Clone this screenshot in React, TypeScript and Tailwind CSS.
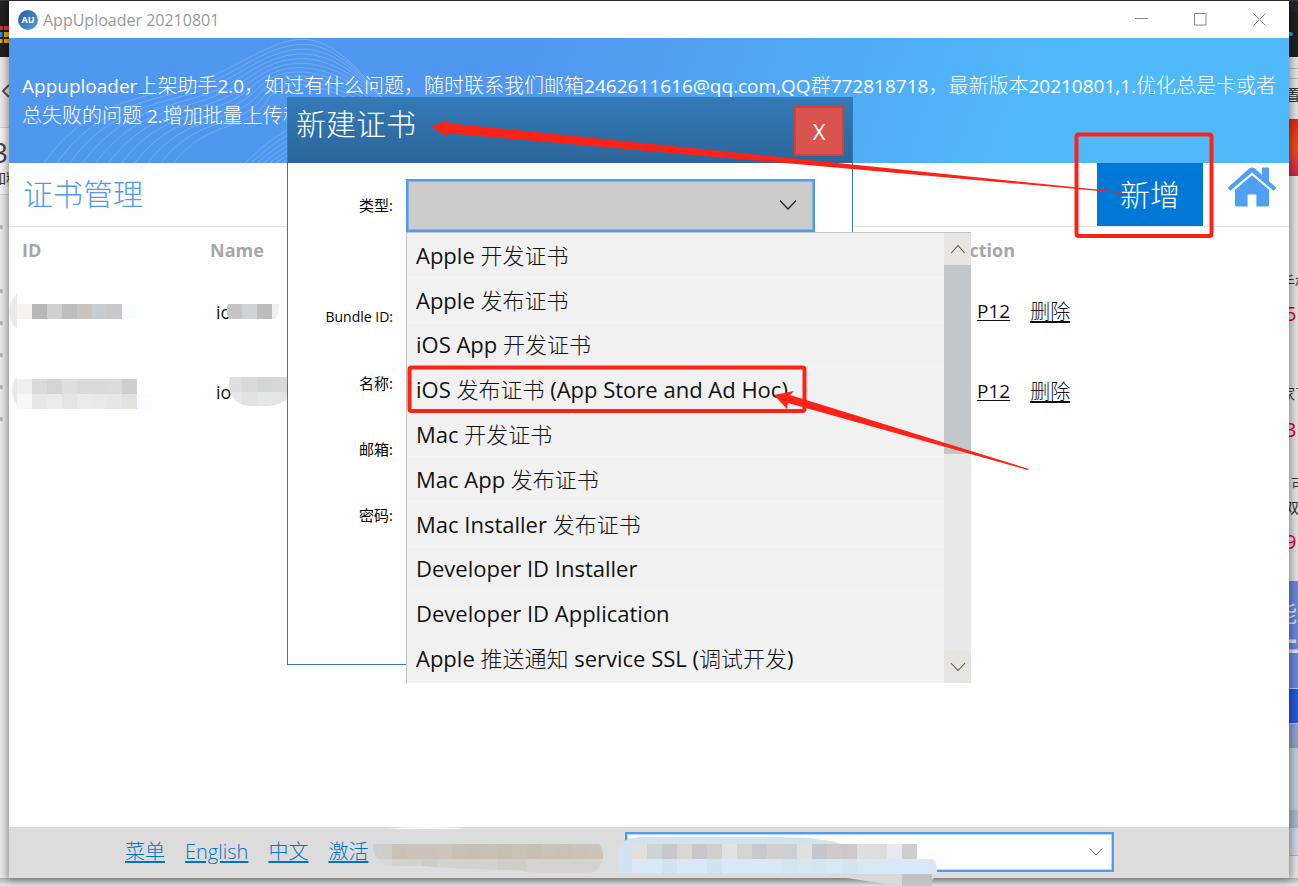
import React from 'react';

interface Cert {
  id: number;
  prefix: string;
}

interface Field {
  id: string;
  label: string;
  type: string;
  size: string;
}

const certs: Cert[] = [
  { id: 1, prefix: 'io' },
  { id: 2, prefix: 'io' },
];

const certTypes = [
  'Apple 开发证书',
  'Apple 发布证书',
  'iOS App 开发证书',
  'iOS 发布证书 (App Store and Ad Hoc)',
  'Mac 开发证书',
  'Mac App 发布证书',
  'Mac Installer 发布证书',
  'Developer ID Installer',
  'Developer ID Application',
  'Apple 推送通知 service SSL (调试开发)',
];

const fields: Field[] = [
  { id: 'bundle', label: 'Bundle ID:', type: 'text', size: 'text-sm' },
  { id: 'name', label: '名称:', type: 'text', size: 'text-[15px]' },
  { id: 'email', label: '邮箱:', type: 'email', size: 'text-[15px]' },
  { id: 'password', label: '密码:', type: 'password', size: 'text-[15px]' },
];

const footerLinks = ['菜单', 'English', '中文', '激活'];

const notice = [
  'Appuploader上架助手2.0，如过有什么问题，随时联系我们邮箱2462611616@qq.com,QQ群772818718，最新版本20210801,1.优化总是卡或者',
  '总失败的问题 2.增加批量上传移动',
];

// Latin runs are set a little smaller than the Chinese around them
const MixedText: React.FC<{ text: string }> = ({ text }) => (
  <>
    {text.split(/([\x20-\x7e]+)/).map((part, i) =>
      i % 2 ? <span key={i} className="text-[19px] font-normal">{part}</span> : part
    )}
  </>
);

// One colour per 15px cell
const Mosaic: React.FC<{ rows: string[][]; x?: number; y?: number }> = ({ rows, x = 0, y = 0 }) => (
  <g>
    {rows.map((row, r) =>
      row.map((fill, c) => <rect key={`${r}-${c}`} x={x + c * 15} y={y + r * 15} width="15" height="15" fill={fill} />)
    )}
  </g>
);

const Chevron: React.FC<{ up?: boolean; className?: string }> = ({ up, className }) => (
  <svg viewBox="0 0 18 18" fill="none" stroke="currentColor" strokeWidth="1.2" className={className} aria-hidden="true">
    <path d={up ? 'M1.5 13.5 9 5l7.500 8.500' : 'M1 4.500 9 13l8-8.500'} />
  </svg>
);

const HomeIcon = () => (
  <svg viewBox="0 0 48 40" className="h-10 w-12" fill="#509ff2" aria-hidden="true">
    <path d="M24 .5c1 0 2 .4 2.800 1.100L34 8V1.500c0-.6.4-1 1-1h5c.6 0 1 .4 1 1v12.700l6.500 5.800c.6.5.6 1.200.1 1.700l-1.200 1.300c-.5.5-1.200.5-1.700.1L24 5.400 3.300 23.100c-.5.4-1.200.4-1.700-.1L.4 21.700c-.5-.5-.5-1.200.1-1.700L21.200 1.600C22 .9 23 .5 24 .5z" />
    <path d="M24 8.200 41 22.800V38c0 .8-.6 1.400-1.400 1.400H28.400V28.500c0-.7-.4-1-1-1h-6.800c-.6 0-1 .3-1 1v10.900H8.400C7.600 39.400 7 38.800 7 38V22.800z" />
  </svg>
);

const Waves = () => (
  <svg viewBox="0 0 440 125" className="absolute left-0 top-0 h-full w-[440px]" fill="none" stroke="#fff" strokeOpacity="0.2" aria-hidden="true">
    {[...Array(11)].map((_, i) => (
      <path
        key={i}
        d={`M${34 + i * 13} 126C${90 + i * 11} ${48 + i * 3} ${150 + i * 9} ${66 + i * 3} ${220 + i * 4} ${30 + i * 3}S${310 + i * 5} ${-24 + i * 9} ${385 + i * 3} ${75 + i * 3}`}
      />
    ))}
    {[...Array(8)].map((_, i) => (
      <path key={i} d={`M${235 + i * 6} 126Q${290 + i * 4} ${70 + i * 5} 360 ${68 + i * 5}`} />
    ))}
  </svg>
);

const LeftBackdrop = () => (
  <aside className="flex w-[9px] shrink-0 flex-col overflow-hidden whitespace-nowrap bg-[#ebebeb]">
    <div className="h-14 bg-[#212121] pt-[25px]">
      <svg width="9" height="17" aria-hidden="true">
        <path d="M0 0h2.500v4H0zM4 0h5v4H4z" fill="#e8333a" />
        <path d="M0 6h2.500v5H0z" fill="#1e90ea" />
        <path d="M4 6h5v5H4zM0 13h2.500v4H0zM4 13h5v4H4z" fill="#f0a511" />
      </svg>
    </div>
    <div className="h-[71px] border-b border-[#cfcfcf] pt-[27px]">
      <svg width="9" height="14" fill="none" stroke="#555" strokeWidth="2" aria-hidden="true">
        <path d="M9 1 3 7l6 6" />
      </svg>
    </div>
    <div className="h-[67px] border-b border-[#d0d0d0] bg-[#f5f5f5] pt-2">
      <div className="-ml-2 text-[28px] leading-8 text-[#444455]">3</div>
      <div className="-ml-2 text-[14px] leading-5 text-[#333]">加料</div>
    </div>
    <div className="flex flex-1 flex-col gap-7 pt-[30px]">
      {[...Array(7)].map((_, i) => (
        <span key={i} className={i === 1 ? 'h-1' : 'h-1 w-[3px] rounded-r-full bg-[#b4b4b4]'} />
      ))}
    </div>
  </aside>
);

const RightBackdrop = () => (
  <aside className="flex w-[9px] shrink-0 flex-col overflow-hidden whitespace-nowrap bg-[#e4e4e4] text-[#333]">
    <div className="h-14 border-t-[11px] border-[#25242e] bg-[#202020] pt-5">
      <span className="block h-1 w-1 rounded-r-full bg-[#23a5c4]" />
    </div>
    <div className="h-3 border-b border-[#bbb]" />
    <div className="h-[10px] border-b border-[#bbb]" />
    <div className="h-10 pt-1 text-[16px] leading-6"><span className="-ml-1">置</span></div>
    <div className="h-[57px] bg-linear-to-b from-[#e9260d] via-[#ee4b0c] to-[#cf2350]" />
    <div className="h-[405px] pt-24">
      <div className="-ml-2 text-[14px] leading-5">手机</div>
      <div className="-ml-1 pt-2 text-[20px] leading-7 text-[#e1001e]">5</div>
      <div className="-ml-2 pt-14 text-[14px] leading-5">家了</div>
      <div className="-ml-1 pt-3 text-[20px] leading-7 text-[#e1001e]">3</div>
      <div className="ml-0.5 pt-7 text-[14px] leading-6">可</div>
      <div className="-ml-1 text-[14px] leading-6">双</div>
      <div className="-ml-1 pt-2 text-[20px] leading-7 text-[#e1001e]">9</div>
    </div>
    <div className="h-[107px] bg-[#6687d8] pt-4 text-[#dfe3ee]">
      <div className="-ml-4 text-[24px] leading-8">能</div>
      <div className="-ml-5 text-[30px] leading-10 font-bold">牛</div>
    </div>
    <div className="h-9 border-y border-[#b9c8f2] bg-[#2358dc]" />
    <div className="h-6 border-b-4 border-[#89a3b4] bg-[#90a3d2]" />
    <div className="h-20 border-b-[18px] border-[#a5bcc8] bg-[#bccfda]" />
    <div className="h-7 border-b border-[#a8b1bd] bg-[#cbd8e8]" />
  </aside>
);

const TitleBar = () => (
  <header className="flex h-[37px] shrink-0 items-center bg-white pl-[9px]">
    <span className="flex h-5 w-5 items-center justify-center rounded-full bg-linear-to-br from-[#2b55a5] to-[#4fa9cf] text-[9px] font-bold text-white">
      AU
    </span>
    <span className="ml-[5px] text-base text-[#999]">AppUploader 20210801</span>
    <div className="ml-auto flex text-[#888]">
      <button type="button" aria-label="Minimize" className="flex h-9 w-[59px] items-center justify-center">
        <svg width="13" height="13" stroke="currentColor" aria-hidden="true"><path d="M0 5.500h13" /></svg>
      </button>
      <button type="button" aria-label="Maximize" className="flex h-9 w-[59px] items-center justify-center">
        <svg width="13" height="13" fill="none" stroke="currentColor" aria-hidden="true"><path d="M.5.5h11.500v11.500H.5z" /></svg>
      </button>
      <button type="button" aria-label="Close" className="flex h-9 w-[59px] items-center justify-center">
        <svg width="13" height="13" stroke="currentColor" aria-hidden="true"><path d="m.5.5 12 12m0-12-12 12" /></svg>
      </button>
    </div>
  </header>
);

const NewCertDialog = () => (
  <section role="dialog" aria-labelledby="dialog-title" className="absolute left-[278px] top-24 z-10 flex h-[568px] w-[566px] flex-col border border-[#337ab7] bg-white">
    <div className="flex h-[65px] shrink-0 items-start justify-between bg-linear-to-b from-[#337ab7] to-[#2b669a] px-2 pt-2">
      <h2 id="dialog-title" className="text-[30px] leading-9 font-light text-white">新建证书</h2>
      <button type="button" className="h-[50px] w-[50px] border-2 border-[#d43f3a] bg-[#d9534f] text-[22px] leading-none text-white">X</button>
    </div>
    <form className="flex flex-col pr-[37px] pt-4">
      <div className="relative mb-[60px] flex items-center gap-[13px]">
        <label htmlFor="cert-type" className="w-[105px] text-right text-[15px] text-black">类型:</label>
        <select id="cert-type" className="h-[53px] flex-1 appearance-none border-2 border-[#4f9bf0] bg-[#ccc] px-2 text-[22px] inset-ring inset-ring-[#8ab0dc]">
          <option value="" />
          {certTypes.map((t) => <option key={t}>{t}</option>)}
        </select>
        <Chevron className="pointer-events-none absolute right-[18px] top-[17px] h-[18px] w-[18px] text-[#222]" />

        {/* Opened list */}
        <div className="absolute left-[118px] top-[53px] z-20 flex h-[451px] w-[565px] border-l border-t border-[#c4c4c4] bg-[#f1f1f1]">
          <ul role="listbox" aria-label="类型" className="grid h-[448px] flex-1 grid-rows-10">
            {certTypes.map((t) => (
              <li key={t} role="option" aria-selected="false" className="flex items-center whitespace-pre border-b border-[#f5f5f5] pl-[9px] text-[22px] leading-none text-[#111]">
                {t.split(/([\u4e00-\u9fff]+)/).map((part, i) =>
                  i % 2 ? <span key={i} className="font-light">{part}</span> : part
                )}
              </li>
            ))}
          </ul>
          <div className="flex w-[27px] shrink-0 flex-col bg-[#e8e8e8]">
            <button type="button" aria-label="Scroll up" className="flex h-8 items-center justify-center bg-[#e6e5e1] text-[#555]">
              <Chevron up className="h-4 w-4" />
            </button>
            <div className="h-[189px] bg-[#c2c7ca]" />
            <button type="button" aria-label="Scroll down" className="mt-auto flex h-8 items-center justify-center bg-[#e6e5e1] text-[#555]">
              <Chevron className="h-4 w-4" />
            </button>
          </div>
        </div>
      </div>
      <div className="flex flex-col gap-4">
        {fields.map((f) => (
          <div key={f.id} className="flex items-center gap-[13px]">
            <label htmlFor={f.id} className={`w-[105px] text-right text-black ${f.size}`}>{f.label}</label>
            <input id={f.id} type={f.type} className="h-[50px] flex-1 border border-[#ccc] px-2" />
          </div>
        ))}
      </div>
    </form>
  </section>
);

const idMosaics: string[][][] = [
  [['#f4f3f1', '#b7b7b7', '#d0d0d0', '#bebebe', '#c9c4c1', '#cacdd0', '#c8c8c8', '#fafcff']],
  [
    ['#f0efed', '#dadada', '#d4d4d4', '#dfdfdf', '#d9dbda', '#dadada', '#dbdbd9', '#cecece'],
    ['#f7f7f7', '#e8e6e7', '#e9ecea', '#e4e4e4', '#ebebe9', '#e9e9e9', '#e7e7e7', '#e4e2e1', '#fbfcff'],
  ],
];

const nameMosaics: string[][][] = [
  [['#c7c5c4', '#cfd3d4', '#bdbcbd', '#f0f0f0']],
  [
    ['#e0dfe0', '#d9d9d9', '#d4d6d5', '#dad8d7'],
    ['#e8e7e8', '#e0e2e5', '#e5e7e7', '#e4e4e4'],
  ],
];

const nameClips = ['M1 7h51q0 10-4 15H2q-4-7-1-15z', 'M3 0h57v22q-8 7-20 7H24Q8 29 3 15 1 7 3 0z'];

const CertTable = () => (
  <table className="w-full table-fixed text-left text-[#111]">
    <thead>
      <tr className="h-[45px] text-[18px] text-[#a6a6a6]">
        <th className="w-[201px] pl-[13px] pt-0.5">ID</th>
        <th className="w-[747px] pt-0.5">Name</th>
        <th className="pt-0.5">Action</th>
      </tr>
    </thead>
    <tbody>
      {certs.map((cert, i) => (
        <tr key={cert.id} className="h-20">
          <td>
            <svg viewBox="0 0 160 36" className="h-9 w-40" aria-hidden="true">
              {i === 0 ? <path d="M8 0C3 5 0 9 0 17s3 13 8 18z" fill="#e9eaea" /> : <path d="M8 3C0 11 2 30 14 35l-6-6z" fill="#e7e9e8" />}
              <Mosaic rows={idMosaics[i]} x={8} y={i === 0 ? 10 : 5} />
            </svg>
          </td>
          <td className="pl-[6px]">
            <div className="flex items-center">
              <span className="text-[18px]">{cert.prefix}</span>
              <svg width="60" height="30" className="-ml-1" aria-hidden="true">
                <clipPath id={`name-${cert.id}`}>
                  <path d={nameClips[i]} />
                </clipPath>
                <g clipPath={`url(#name-${cert.id})`}>
                  <Mosaic rows={nameMosaics[i]} y={i === 0 ? 7 : 0} />
                </g>
              </svg>
            </div>
          </td>
          <td className="pl-5">
            <div className="flex gap-5 text-[19px]">
              <a href="#p12" className="underline underline-offset-2">P12</a>
              <a href="#delete" className="text-[20px] font-light underline underline-offset-2">删除</a>
            </div>
          </td>
        </tr>
      ))}
    </tbody>
  </table>
);

const footerTop = ['#e3dfdc', '#ced3d6', '#c8c8ca', '#d8d7d3', '#c6c6cb', '#d1cfcd', '#e0e2e4', '#d3d5cf', '#c8c9ce', '#d1d0ce', '#cbd0d1', '#e0e0df', '#c5c5cb', '#cfcbcc', '#cdc8c9', '#dedfe1', '#dbdcdc', '#e8e8ee', '#cecece'];
const footerBottom = ['#dbe7f7', '#dbe7f7', '#d3e2f0', '#dbe7f7', '#dbe7f7', '#d3e2f0', '#dbe7f7', '#dbe7f7', '#dbe7f7', '#dbe7f7', '#d5e4f1', '#d8e6f4', '#d5e4f1', '#d9e6f5', '#d5e2f0', '#d9e7f5', '#d9e7f5', '#dbe7f7', '#dbe7f7', '#dbe7f7'];
const brownTop = ['#d1cec9', '#c9c1b6', '#cbc4ba', '#cac4bc', '#cdc5bb', '#c9c0b5', '#c8beb2', '#c9c0b5', '#c7beb2', '#cac1b6', '#c8bfb3', '#cbc2b7', '#c9c1b5', '#cac3b9', '#ccc4b9', '#c9c0b5'];
const brownBottom = ['#d8d8d6', '#d3d2cd', '#d3d2cd', '#cfccc5', '#d3d2cd', '#d3d2cd', '#d3d2cd', '#d3d2cd', '#d0cdc6', '#d1cdc6', '#d4d3cf', '#d4d3cf', '#d4d3cf', '#d4d3cf', '#d4d3cf', '#d4d3cf'];

const Footer = () => (
  <footer className="relative flex h-[51px] shrink-0 items-start bg-[#dcdcdc] pt-[5px]">
    <nav className="flex w-[616px] shrink-0 gap-5 pl-[116px] pt-[5px] text-[20px] leading-[30px] font-light text-[#0074cc]">
      {footerLinks.map((l) => (
        <a key={l} href="#menu" className="underline underline-offset-2">{l}</a>
      ))}
    </nav>
    <div className="relative w-[489px]">
      <select aria-label="Account" className="block h-10 w-full appearance-none border-2 border-[#4f9bf0] bg-white inset-ring inset-ring-[#b5d4f7]" />
      <Chevron className="pointer-events-none absolute right-[11px] top-[13px] h-[14px] w-[14px] text-[#444]" />
    </div>
    <svg width="620" height="64" className="pointer-events-none absolute left-[360px] top-0" aria-hidden="true">
      <clipPath id="brown">
        <path d="M4 17h226q4 4 4 14-4 15-14 15h-58q-8-3-18-3-60-1-90-4H24Q4 37 4 17z" />
      </clipPath>
      <g clipPath="url(#brown)">
        <Mosaic rows={[brownTop, brownBottom]} x={8} y={17} />
        <path d="M4 17h4v15H4z" fill="#bfd0dc" />
      </g>
      <path d="M16 2q45-4 82 0z" fill="#fff" />
      <path d="M248 24c2-8 10-14 24-14h140q40 0 60 7h-209v30h-8c-5 0-7-3-7-8z" fill="#d3e2f0" />
      <path d="M450 17h60q24 2 42 4l16 5q5 3 3 6H450z" fill="#fdfdfd" />
      <Mosaic rows={[footerTop, footerBottom]} x={263} y={17} />
      <path d="M563 32q5 0 5 15h-5z" fill="#dbe7f7" />
      <path d="M450 47h118q-4 8-16 12h-20z" fill="#d9d9d9" />
      <path d="M533 47h30v12h-30z" fill="#c2c1c4" />
    </svg>
  </footer>
);

const Annotations = () => (
  <svg width="1298" height="886" className="pointer-events-none absolute left-0 top-0 z-30" fill="none" aria-hidden="true">
    <rect x="1076.500" y="134.500" width="135" height="101.500" rx="2" stroke="#ff2216" strokeWidth="4" />
    <rect x="409.500" y="367.500" width="395" height="43.500" rx="2" stroke="#ff2216" strokeWidth="4" />
    <path d="m431 127 19-8-4 4 676 69v1l-676-60 2 4z" fill="#ff2216" />
    <path d="m774 395 20-4-4 4 239 74-1 1-240-67-1 6z" fill="#ff2216" />
  </svg>
);

const App: React.FC = () => {
  return (
    <div className="relative flex min-h-screen flex-col overflow-hidden bg-[#e9e9e9] pt-px font-['Open_Sans','Noto_Sans_CJK_SC',sans-serif]">
      <div className="absolute inset-x-0 top-0 h-px bg-[#3d3a42]" />
      <div className="flex flex-1">
        <LeftBackdrop />
        <main className="relative flex min-w-0 flex-1 flex-col bg-white shadow-[0_0_8px_2px_rgba(0,0,0,0.4)]">
          <TitleBar />
          {/* Banner */}
          <div className="relative h-[125px] shrink-0 overflow-hidden bg-linear-[110deg] from-[#5097f0] from-40% to-[#50b9fa] to-80%">
            <Waves />
            <p className="relative whitespace-nowrap pl-[13px] pt-[33px] text-[20px] leading-[30px] font-light text-white">
              <MixedText text={notice[0]} />
              <br />
              <MixedText text={notice[1]} />
            </p>
          </div>
          {/* Toolbar */}
          <div className="flex h-16 shrink-0 items-start border-b border-[#e6e6e6] pl-[14px] pr-[13px]">
            <h1 className="text-[30px] leading-[61px] font-light text-[#509bf0]">证书管理</h1>
            <button type="button" className="ml-auto h-[63px] w-[106px] bg-[#0078d7] text-[30px] font-light text-white">新增</button>
            <a href="#home" aria-label="Home" className="ml-[25px] mt-1"><HomeIcon /></a>
          </div>
          <div className="flex-1">
            <CertTable />
          </div>
          <Footer />
          <NewCertDialog />
        </main>
        <RightBackdrop />
      </div>
      <div className="h-2 bg-linear-to-b from-[#b4b4b4] to-[#e9e9e9]" />
      <Annotations />
    </div>
  );
};

export default App;
